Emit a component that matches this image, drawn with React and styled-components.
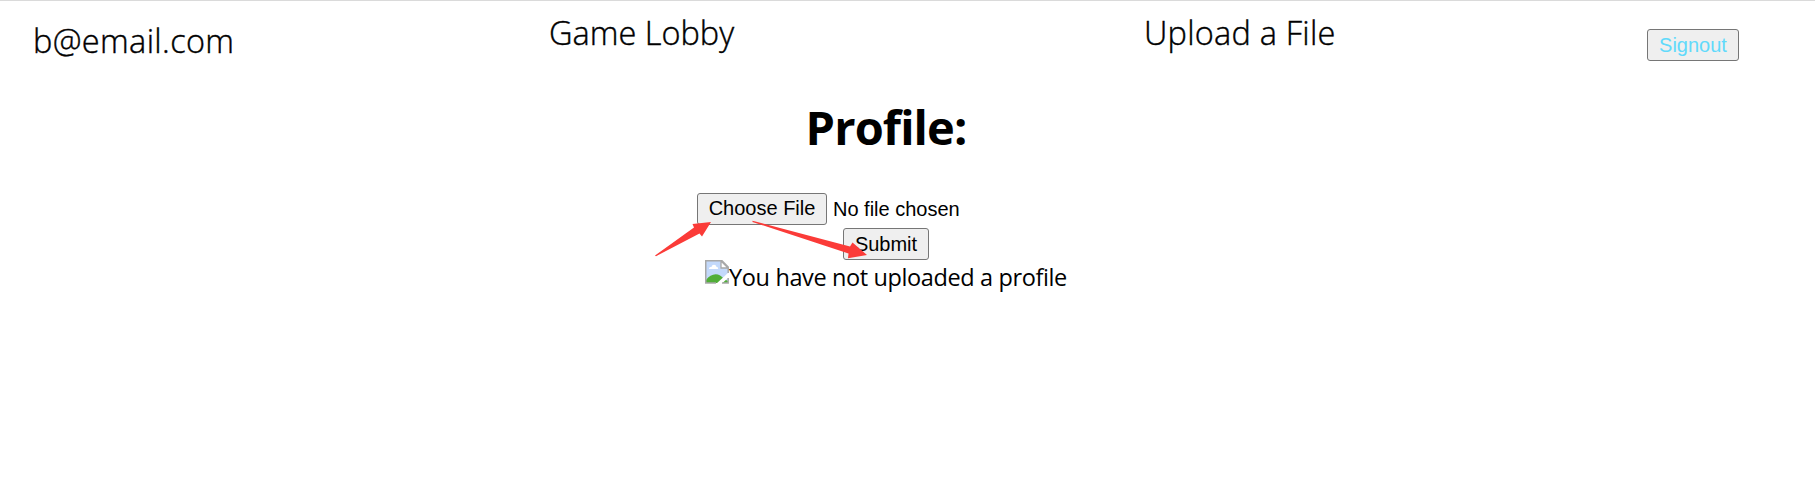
import React from 'react';
import styled, { createGlobalStyle } from 'styled-components';

const GlobalStyle = createGlobalStyle`
  * { box-sizing: border-box; }
  body { margin: 0; background: #fff; color: #000; font-family: "Open Sans", "Noto Sans", sans-serif; }
`;

const Page = styled.div`
  position: relative;
  height: 491px;
  overflow: hidden;
  border-top: 1px solid #dadada;
`;

const Nav = styled.nav`
  display: flex;
  align-items: flex-start;
  height: 90px;
  padding-left: 33px;
`;

const NavItem = styled.div`
  width: ${(p) => p.$width}px;
  padding-top: ${(p) => p.$top}px;
  font-size: 32.5px;
  font-weight: 300;
  line-height: 44px;
  letter-spacing: ${(p) => p.$spacing || 0}px;
  -webkit-text-stroke: 0.4px #000;
  white-space: nowrap;
`;

const Button = styled.button`
  width: ${(p) => p.$width}px;
  height: 32px;
  padding: 0 0 ${(p) => p.$lift || 0}px;
  border: 1px solid #767676;
  border-radius: 3px;
  background: #efefef;
  color: ${(p) => p.$color || '#000'};
  font: 20px/24px "Liberation Sans", Arial, sans-serif;
  white-space: nowrap;
`;

const SignoutSlot = styled.div`
  padding-top: 28px;
`;

const Main = styled.main`
  display: flex;
  flex-direction: column;
  align-items: center;
  width: 1772px;
`;

const Title = styled.h1`
  margin: 0;
  height: 102px;
  padding-top: 4px;
  font-size: 47px;
  font-weight: 700;
  line-height: 64px;
  letter-spacing: -0.9px;
`;

const FileRow = styled.div`
  display: flex;
  align-items: center;
  gap: 6px;
  width: 378px;
  height: 32px;
  margin-bottom: 3px;
`;

const FileStatus = styled.span`
  font: 20px/24px "Liberation Sans", Arial, sans-serif;
`;

const Picture = styled.div`
  display: flex;
  align-items: flex-start;
  height: 36px;
`;

const AltText = styled.span`
  font-size: 23.5px;
  line-height: 34px;
  letter-spacing: -0.38px;
  white-space: nowrap;
`;

const Arrows = styled.svg`
  position: absolute;
  left: 650px;
  top: 214px;
`;

function BrokenImage() {
  return (
    <svg width="24" height="24" viewBox="0 0 24 24">
      <path d="M1 1H17L23 7V23H1Z" fill="#c3d9fb" />
      <path d="M4 9c0-2 1.500-2 2.500-2C7 4 11 4 11.500 7c2 0 2 2 1 2Z" fill="#fff" />
      <path d="M1 23V20C6 13 14 12 19 19L23 21V23Z" fill="#51ae38" />
      <path d="M11 24L24 12V17L16.500 24Z" fill="#fff" />
      <path d="M11 23H0.750V0.750H17L23.200 7V13M17 23H23.200V18" fill="none" stroke="#a8a8a8" strokeWidth="1.500" />
      <path d="M16 1V8H23Z" fill="#fff" stroke="#a8a8a8" strokeWidth="1.300" />
    </svg>
  );
}

export default function App() {
  return (
    <>
      <GlobalStyle />
      <Page>
        <Nav>
          <NavItem $width={516} $top={18} $spacing={0.35}>b@email.com</NavItem>
          <NavItem $width={595} $top={10}>Game Lobby</NavItem>
          <NavItem $width={503} $top={10} $spacing={0.22}>Upload a File</NavItem>
          <SignoutSlot><Button $width={92} $color="#61dafb">Signout</Button></SignoutSlot>
        </Nav>
        <Main>
          <Title>Profile:</Title>
          <FileRow>
            <Button $width={130} $lift={2}>Choose File</Button>
            <FileStatus>No file chosen</FileStatus>
          </FileRow>
          <Button $width={86}>Submit</Button>
          <Picture>
            <BrokenImage />
            <AltText>You have not uploaded a profile</AltText>
          </Picture>
        </Main>
        <Arrows width="225" height="50" viewBox="650 215 225 50" fill="#fb3b38">
          <path d="M655 255.500L694 227.500L692.500 224L711 222L702 236.500L699.500 233.500L656 256.200Z" />
          <path d="M752.500 220.800L850 246.500L852.500 242.500L867 255L848 258.300L848.500 253.500L752.500 222Z" />
        </Arrows>
      </Page>
    </>
  );
}
